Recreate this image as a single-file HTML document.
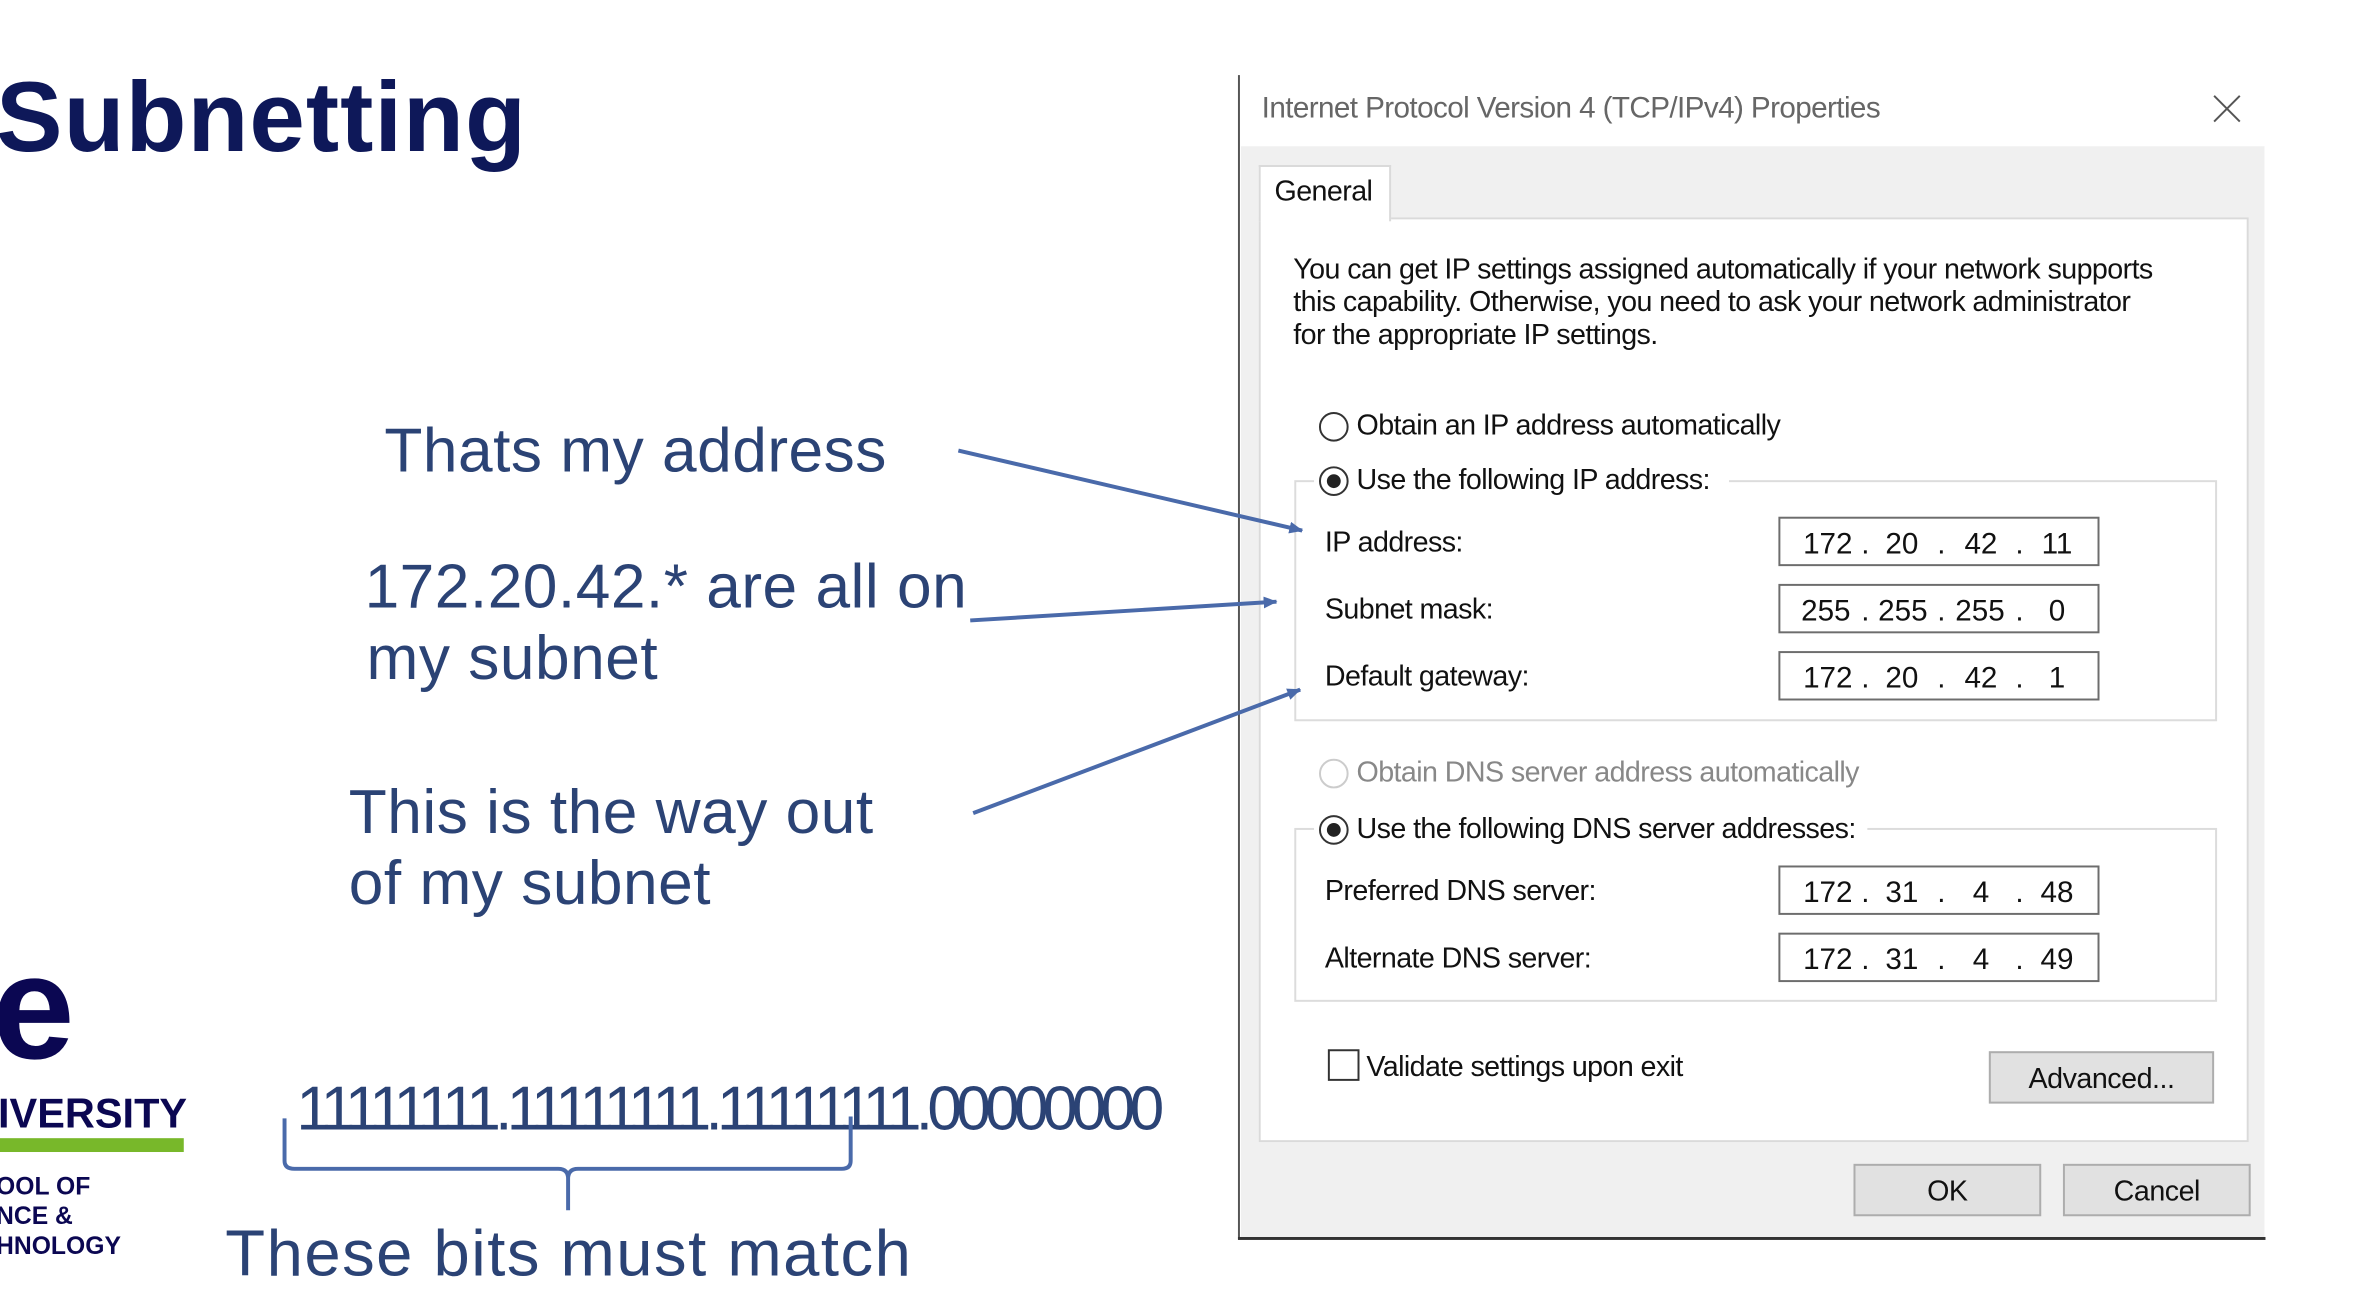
<!DOCTYPE html>
<html><head><meta charset="utf-8"><style>
*{margin:0;padding:0;box-sizing:border-box}
body{width:2356px;height:1310px;background:#fff;position:relative;overflow:hidden;font-family:"Liberation Sans",sans-serif}
#w{position:absolute;left:0;top:0;width:2385px;height:1326px;transform:scale(0.988);transform-origin:0 0}
.a{position:absolute;white-space:nowrap}
.blue{color:#2b4375;font-size:63px;letter-spacing:0.5px}
.d{position:absolute;white-space:nowrap;font-size:29px;color:#111;letter-spacing:-0.6px}
.box{position:absolute;background:#fff;border:2px solid #6d6d6d;width:325px;height:50px}
.box span{position:absolute;top:9px;width:60px;margin-left:-30px;text-align:center;font-size:30px;color:#111}
.rad{position:absolute;width:30px;height:30px;border:2px solid #333;border-radius:50%;background:#fff}
.rad.on::after{content:"";position:absolute;left:6px;top:6px;width:14px;height:14px;border-radius:50%;background:#222}
.grp{position:absolute;border:2px solid #dcdcdc}
.btn{position:absolute;background:#e1e1e1;border:2px solid #adadad;text-align:center;font-size:29px;color:#111;letter-spacing:-0.5px}
</style></head><body><div id="w">
<div class="a" style="left:-4px;top:62px;font-size:101px;font-weight:bold;color:#0e1859;letter-spacing:1px">Subnetting</div>

<div class="a blue" style="left:389px;top:420px">Thats my address</div>
<div class="a blue" style="left:369px;top:558px">172.20.42.* are all on</div>
<div class="a blue" style="left:371px;top:630px">my subnet</div>
<div class="a blue" style="left:353px;top:786px">This is the way out</div>
<div class="a blue" style="left:353px;top:858px">of my subnet</div>
<div class="a blue" style="left:300px;top:1086px;font-size:63px;letter-spacing:-5.8px">11111111.11111111.11111111.00000000</div>
<div class="a blue" style="left:228px;top:1230px;font-size:66px;letter-spacing:1.5px">These bits  must match</div>

<!-- logo -->
<div class="a" style="left:-8px;top:944px;font-size:150px;font-weight:bold;color:#0b0752;line-height:1">e</div>
<div class="a" style="left:-2px;top:1103px;font-size:42px;font-weight:bold;color:#0b0752">IVERSITY</div>
<div class="a" style="left:0;top:1152px;width:186px;height:14px;background:#78b82a"></div>
<div class="a" style="left:-4px;top:1186px;font-size:25px;font-weight:bold;color:#0b0752;line-height:30px">OOL OF<br>NCE &amp;<br>HNOLOGY</div>

<!-- dialog -->
<div class="a" style="left:1253px;top:76px;width:2px;height:1178px;background:#555"></div>
<div class="a" style="left:1253px;top:1252px;width:1040px;height:3px;background:#333"></div>
<div class="d" style="left:1277px;top:93px;color:#666;font-size:30px">Internet Protocol Version 4 (TCP/IPv4) Properties</div>
<svg class="a" style="left:2240px;top:96px" width="28" height="28"><path d="M1,1L27,27M27,1L1,27" stroke="#555" stroke-width="2"/></svg>
<div class="a" style="left:1256px;top:148px;width:1036px;height:1104px;background:#f0f0f0"></div>
<div class="a" style="left:1274px;top:220px;width:1002px;height:936px;background:#fff;border:2px solid #dadada"></div>
<div class="a" style="left:1274px;top:167px;width:134px;height:57px;background:#fff;border:2px solid #dadada;border-bottom:none"></div>
<div class="d" style="left:1290px;top:178px">General</div>

<div class="d" style="left:1309px;top:257px;line-height:33px">You can get IP settings assigned automatically if your network supports<br>this capability. Otherwise, you need to ask your network administrator<br>for the appropriate IP settings.</div>

<div class="rad" style="left:1335px;top:417px"></div>
<div class="d" style="left:1373px;top:415px">Obtain an IP address automatically</div>

<div class="grp" style="left:1310px;top:486px;width:934px;height:244px"></div>
<div class="a" style="left:1330px;top:470px;width:420px;height:32px;background:#fff"></div>
<div class="rad on" style="left:1335px;top:472px"></div>
<div class="d" style="left:1373px;top:470px">Use the following IP address:</div>
<div class="d" style="left:1341px;top:533px">IP address:</div>
<div class="d" style="left:1341px;top:601px">Subnet mask:</div>
<div class="d" style="left:1341px;top:669px">Default gateway:</div>
<div class="box" style="left:1800px;top:523px"><span style="left:48px">172</span><span style="left:86px">.</span><span style="left:123px">20</span><span style="left:163px">.</span><span style="left:203px">42</span><span style="left:242px">.</span><span style="left:280px">11</span></div>
<div class="box" style="left:1800px;top:591px"><span style="left:46px">255</span><span style="left:86px">.</span><span style="left:124px">255</span><span style="left:163px">.</span><span style="left:202px">255</span><span style="left:242px">.</span><span style="left:280px">0</span></div>
<div class="box" style="left:1800px;top:659px"><span style="left:48px">172</span><span style="left:86px">.</span><span style="left:123px">20</span><span style="left:163px">.</span><span style="left:203px">42</span><span style="left:242px">.</span><span style="left:280px">1</span></div>

<div class="rad" style="left:1335px;top:768px;border-color:#ccc"></div>
<div class="d" style="left:1373px;top:766px;color:#888">Obtain DNS server address automatically</div>

<div class="grp" style="left:1310px;top:838px;width:934px;height:176px"></div>
<div class="a" style="left:1330px;top:822px;width:560px;height:32px;background:#fff"></div>
<div class="rad on" style="left:1335px;top:825px"></div>
<div class="d" style="left:1373px;top:823px">Use the following DNS server addresses:</div>
<div class="d" style="left:1341px;top:886px">Preferred DNS server:</div>
<div class="d" style="left:1341px;top:954px">Alternate DNS server:</div>
<div class="box" style="left:1800px;top:876px"><span style="left:48px">172</span><span style="left:86px">.</span><span style="left:123px">31</span><span style="left:163px">.</span><span style="left:203px">4</span><span style="left:242px">.</span><span style="left:280px">48</span></div>
<div class="box" style="left:1800px;top:944px"><span style="left:48px">172</span><span style="left:86px">.</span><span style="left:123px">31</span><span style="left:163px">.</span><span style="left:203px">4</span><span style="left:242px">.</span><span style="left:280px">49</span></div>

<div class="a" style="left:1344px;top:1062px;width:32px;height:32px;border:2px solid #333;background:#fff"></div>
<div class="d" style="left:1383px;top:1064px">Validate settings upon exit</div>
<div class="btn" style="left:2013px;top:1064px;width:228px;height:53px;line-height:52px">Advanced...</div>
<div class="btn" style="left:1876px;top:1178px;width:190px;height:53px;line-height:52px">OK</div>
<div class="btn" style="left:2088px;top:1178px;width:190px;height:53px;line-height:52px">Cancel</div>

<svg class="a" style="left:0;top:0" width="2385" height="1326">
<defs><marker id="m" markerUnits="userSpaceOnUse" markerWidth="14" markerHeight="12" refX="13" refY="6" orient="auto"><path d="M0,0L14,6L0,12z" fill="#4a6aaa"/></marker></defs>
<g stroke="#4a6aaa" stroke-width="4" fill="none">
<line x1="970" y1="456" x2="1318" y2="537" marker-end="url(#m)"/>
<line x1="982" y1="628" x2="1292" y2="609" marker-end="url(#m)"/>
<line x1="985" y1="823" x2="1316" y2="698" marker-end="url(#m)"/>
<path d="M288,1132 V1175 Q288,1183 298,1183 H565 Q575,1183 575,1193 V1225 M575,1193 Q575,1183 585,1183 H852 Q861,1183 861,1175 V1130"/>
</g>
</svg>
</div></body></html>
